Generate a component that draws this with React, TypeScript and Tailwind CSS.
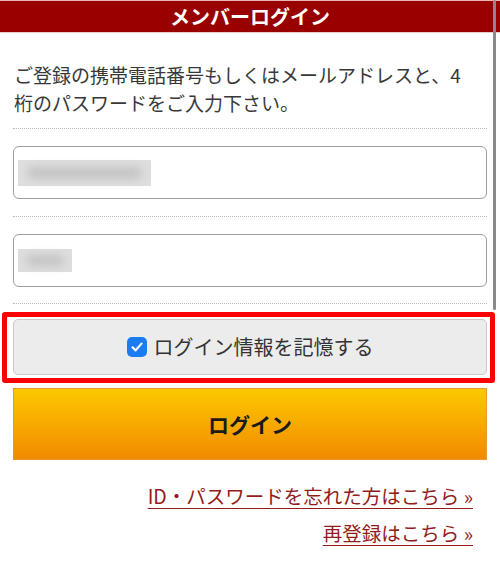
import React from "react";

const jp = { fontFamily: '"Noto Sans CJK JP", "Noto Sans", sans-serif' };

export default function App() {
  return (
    <div className="relative w-[500px] h-[563px] overflow-hidden bg-white" style={jp}>
      <div className="border-t border-[#e9b5b5]">
        <div className="h-[31px] bg-[#990000] flex items-center justify-center text-white font-bold text-[20px] leading-none">
          メンバーログイン
        </div>
      </div>
      <div className="h-px bg-[#f3c9c9]" />

      <div className="px-[13px]">
        <div className="pt-[28px] pb-[11px] border-b border-dotted border-[#bcbcbc] text-[19px] leading-[28px] text-[#383838] pl-px">
          ご登録の携帯電話番号もしくはメールアドレスと、4
          <br />
          桁のパスワードをご入力下さい。
        </div>

        <div className="pt-[17px] pb-[17px] border-b border-dotted border-[#bcbcbc]">
          <div className="h-[53px] rounded-[6px] border border-[#9e9e9e] bg-white flex items-center pl-[4px]">
            <div className="w-[133px] h-[26px] bg-[#dedede] flex items-center justify-center">
              <div className="w-[115px] h-[12px] bg-[#c4c4c4] blur-[4px] rounded-full" />
            </div>
          </div>
        </div>

        <div className="pt-[17px] pb-[16px] border-b border-dotted border-[#bcbcbc]">
          <div className="h-[53px] rounded-[6px] border border-[#9e9e9e] bg-white flex items-center pl-[4px]">
            <div className="w-[54px] h-[23px] bg-[#dedede] flex items-center justify-center">
              <div className="w-[38px] h-[11px] bg-[#c4c4c4] blur-[4px] rounded-full" />
            </div>
          </div>
        </div>

        <div className="-ml-[11px] -mr-[8px] mt-[8px] border-[5px] border-[#ff0000] rounded-[3px] pl-[6px] pr-[3px] pt-[2px] pb-[3px]">
          <div className="h-[56px] rounded-[5px] border border-[#c9c9c9] bg-[#ececec] flex items-center justify-center gap-[7px]">
            <div className="w-[20px] h-[20px] rounded-[5px] bg-[#1a7cf0] flex items-center justify-center">
              <svg width="14" height="14" viewBox="0 0 14 14" fill="none">
                <path d="M2.5 7.3 L5.6 10.4 L11.5 3.6" stroke="white" strokeWidth="2.2" strokeLinecap="round" strokeLinejoin="round" />
              </svg>
            </div>
            <span className="text-[20px] text-[#333] leading-none">ログイン情報を記憶する</span>
          </div>
        </div>

        <div className="mt-[5px] h-[72px] border border-[#ea9a2a] bg-gradient-to-b from-[#fcc800] to-[#f08a00] flex items-center justify-center">
          <span className="text-[21px] font-bold text-[#1a1a1a] leading-none">ログイン</span>
        </div>

        <div className="mt-[22px] pr-[14px] flex flex-col items-end gap-[9px] text-[19.5px] leading-[28px] text-[#921c1c]">
          <a className="underline underline-offset-[4px] decoration-1">ID・パスワードを忘れた方はこちら »</a>
          <a className="underline underline-offset-[4px] decoration-1">再登録はこちら »</a>
        </div>
      </div>

      <div className="absolute left-[493px] top-0 w-[3px] h-[310px] rounded-full bg-[#8a8a8a]" />
    </div>
  );
}
